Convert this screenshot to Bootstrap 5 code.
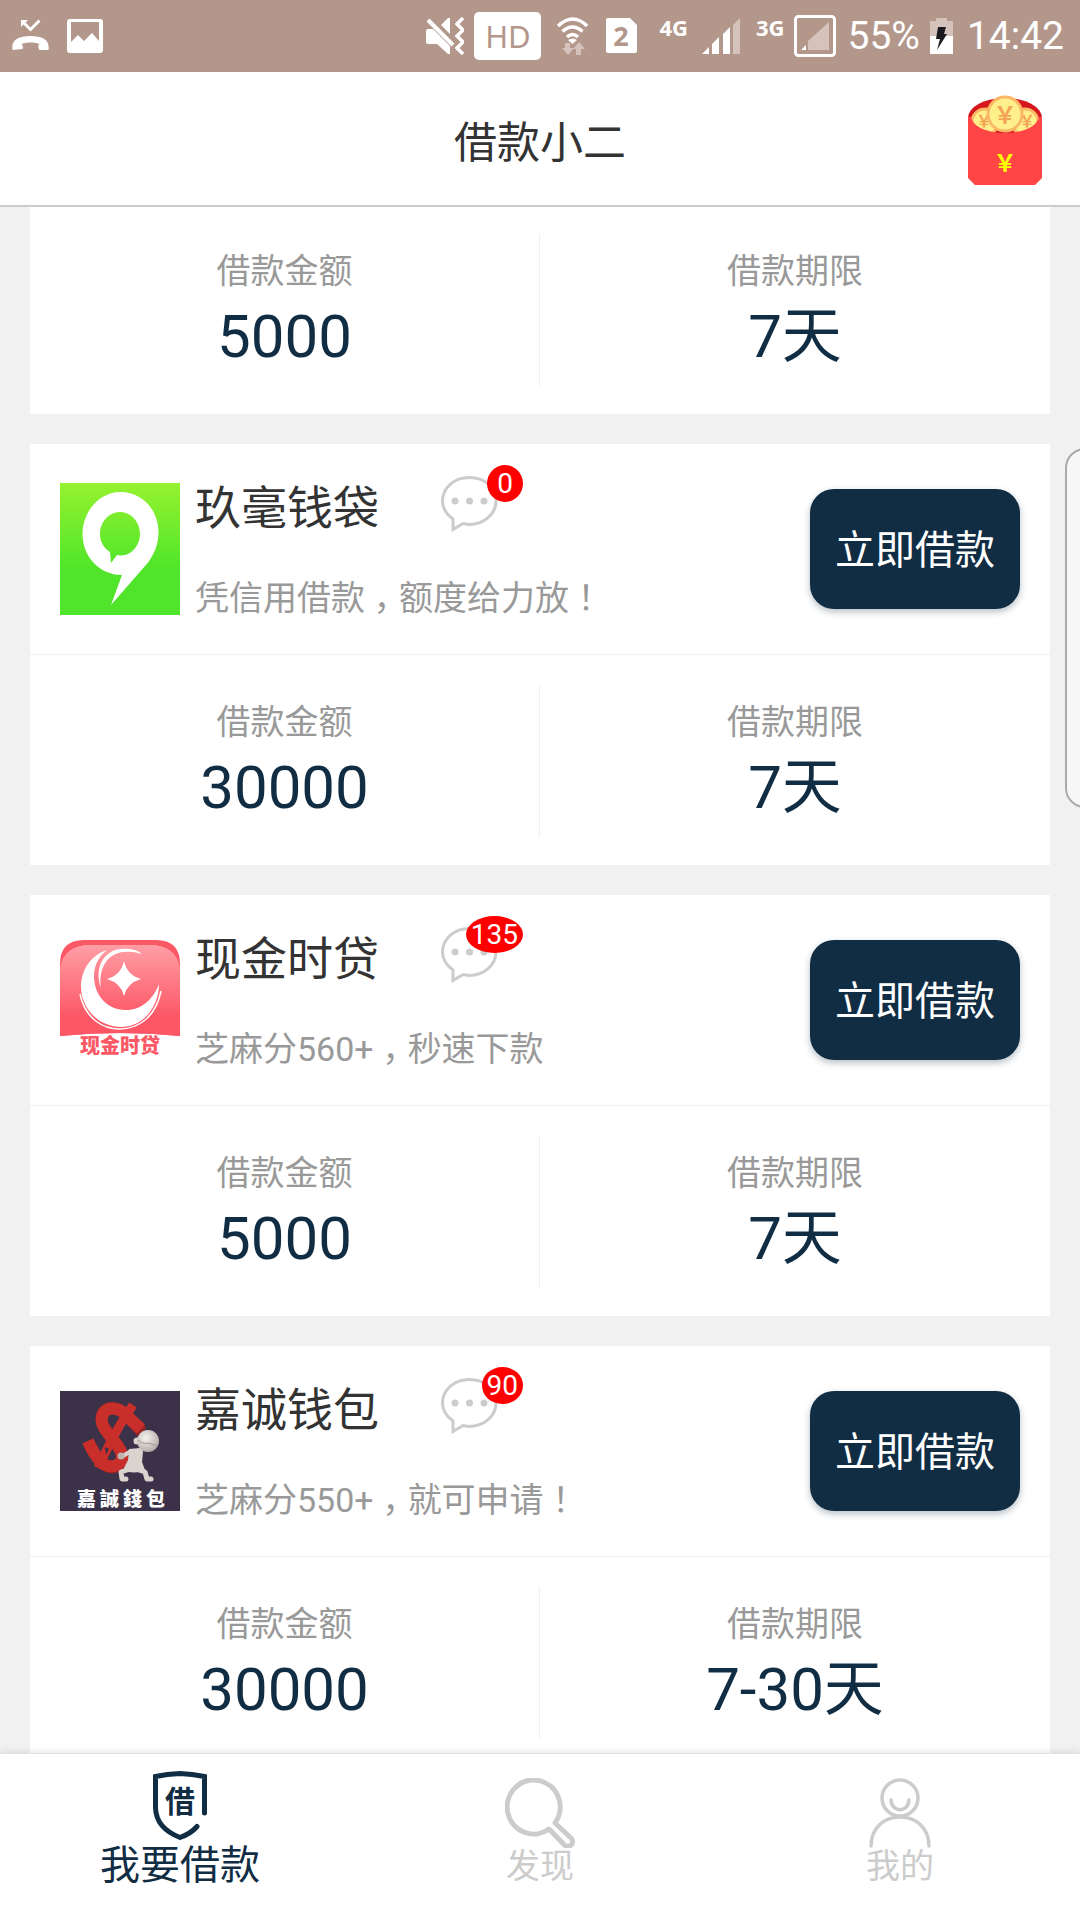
<!DOCTYPE html>
<html lang="zh-CN">
<head>
<meta charset="utf-8">
<meta name="viewport" content="width=device-width, initial-scale=1">
<title>借款小二</title>
<link href="https://cdn.jsdelivr.net/npm/bootstrap@5.3.0/dist/css/bootstrap.min.css" rel="stylesheet">
<style>
  :root { --navy: #112d44; --clay: #b3978b; --ash: #999; --pale: #ccc; }
  body { background: #f1f1f1; color: #333; font-family: Roboto, "Noto Sans CJK SC", sans-serif; }
  svg { display: block; flex: none; }

  .status-bar { background: var(--clay); height: 72px; padding: 0 16px 0 12px; color: #fff; font-size: 39px; line-height: 72px; }
  .status-right { gap: 10px; }
  .hd-chip { background: #fff; color: var(--clay); border-radius: 5px; width: 67px; height: 48px; line-height: 48px; font-family: "Noto Sans", sans-serif; font-size: 31px; text-align: center; }
  .net-type { font-family: "Noto Sans", sans-serif; font-weight: 700; font-size: 22px; line-height: 30px; padding-bottom: 18px; }

  .app-head { height: 136px; border-bottom: 2px solid #ccc; padding: 4px 38px 0; }
  .app-head h1 { font-size: 43px; line-height: 60px; font-weight: 400; padding-top: 5px; }
  .side-cell { width: 74px; }

  .loan-list { min-height: 0; scrollbar-width: none; padding: 0 30px; gap: 30px; }
  .loan-list::-webkit-scrollbar { display: none; }
  .loan-item { background: #fff; flex: none; }
  .loan-top { height: 211px; padding: 0 30px; border-bottom: 1px solid #f0f0f0; }
  .loan-logo { width: 120px; margin-right: 15px; }
  .loan-name { font-size: 46px; line-height: 60px; font-weight: 400; width: 185px; padding-top: 4px; }
  .loan-desc { font-size: 34px; line-height: 50px; color: var(--ash); margin-top: 33px; }
  .wide-mark { display: inline-block; width: 34px; text-align: center; font-family: "Noto Sans CJK JP", sans-serif; font-feature-settings: "halt"; }
  .comment-link { margin-left: 61px; padding-bottom: 4px; }
  .count-badge { position: absolute; right: -25px; top: -11px; min-width: 36px; height: 37px; padding: 0 5px; border-radius: 50%; background: #f00; color: #fff; font-size: 28px; line-height: 38px; text-align: center; }
  .btn-loan { --bs-btn-color: #fff; --bs-btn-bg: var(--navy); --bs-btn-hover-color: #fff; --bs-btn-hover-bg: #1a3d5a; --bs-btn-border-width: 0; --bs-btn-border-radius: 24px; width: 210px; height: 120px; padding: 5px 0 0; font-size: 40px; box-shadow: 0 3px 7px rgba(17,45,68,.3); }

  .loan-stats { padding: 30px 0 28px; }
  .loan-stats > div { padding: 12px 0 14px; }
  .loan-stats > div:first-child { border-right: 1px solid #f0f0f0; }
  .loan-stats dt { font-size: 34px; line-height: 50px; font-weight: 400; color: var(--ash); }
  .loan-stats dd { font-size: 60px; line-height: 70px; color: var(--navy); margin: 6px 0 0; }
  .loan-cut .loan-stats { padding-top: 27px; }

  .edge-handle { position: absolute; right: -25px; top: 241px; width: 40px; height: 360px; border: 2px solid #aaa; border-radius: 24px; background: #f7f7f7; }

  .tab-bar { height: 169px; background: #fff; border-top: 1px solid #e0e0e0; box-shadow: 0 0 9px rgba(0,0,0,.12); z-index: 2; }
  .tab-bar a { color: var(--pale); font-size: 34px; line-height: 36px; text-decoration: none; padding-bottom: 36px; }
  .tab-bar a.active { color: var(--navy); font-size: 40px; line-height: 50px; padding-bottom: 29px; }
</style>
</head>
<body>
<div class="d-flex flex-column vh-100 overflow-hidden">

  <div class="status-bar d-flex align-items-center justify-content-between">
    <div class="d-flex align-items-center">
      <svg width="55" height="36" viewBox="0 0 55 36" fill="#fff"><path d="M9 2l7 0-2.500 2.500 5 5 8-8 2 2-10 10-7-7-2.500 2.500z"/><path d="M.5 32C-1 22 6 18 18.500 18S38 22 36.500 32l-9 0c-2-3-1-5 0-6-5-2-12-2-18 0 1 1 2 3 1 5z"/></svg>
      <svg width="36" height="36" viewBox="0 0 36 36"><rect x="0" y="1" width="36" height="34" rx="3" fill="#fff"/><path d="M4 4h28v19l-7-8-8 8-6-6-7 7z" fill="#b3978b"/></svg>
    </div>
    <div class="status-right d-flex align-items-center">
      <svg width="38" height="38" viewBox="0 0 38 38" fill="#fff"><path d="M0 14q0-2 2-2h5l17 17v8h-2L11 27H2q-2 0-2-2z"/><path d="M15 8l7-7h2v16z"/><path d="M2 3l25 25" stroke="#fff" stroke-width="4"/><path d="M37 1l-6 6 6 6-6 6 6 6-6 6 6 6" fill="none" stroke="#fff" stroke-width="3.500"/></svg>
      <span class="hd-chip">HD</span>
      <svg width="45" height="40" viewBox="2 0 45 40" fill="none"><path d="M9 10q15-14 29 0M13.500 15.500q10-9 20 0M18 21q5.500-5 11 0" stroke="#fff" stroke-width="3.500"/><path d="M19 24q5-3 9 0l-4.500 4z" fill="#fff"/><path d="M16 27h5v5h4l-6 7-6-7h3zM27 39h5v-6h4l-6-7-6 7h3z" fill="#d5c3bb"/></svg>
      <svg width="43" height="36" viewBox="0 0 43 36"><path d="M2 0h22l7 7v26q0 2-2 2H2q-2 0-2-2V2q0-2 2-2z" fill="#fff"/><text x="15" y="28" text-anchor="middle" font-family="Noto Sans, sans-serif" font-weight="700" font-size="27" fill="#b3978b">2</text></svg>
      <span class="net-type me-1">4G</span>
      <svg width="44" height="36" viewBox="0 0 44 36" fill="#fff"><path d="M0 36l7-7v7zM10 26l7-7v17h-7zM21 16l7-7v27h-7z"/><path d="M31 7l7-7v36h-7z" fill="#d5c3bb"/></svg>
      <span class="net-type">3G</span>
      <svg width="43" height="42" viewBox="0 0 43 42"><rect x="1.500" y="1.500" width="39" height="39" rx="3" fill="none" stroke="#fff" stroke-width="3"/><path d="M14 26L35 7v28H14z" fill="#d5c3bb"/><path d="M7 35l5-5v5z" fill="#fff"/></svg>
      <span>55%</span>
      <svg width="27" height="36" viewBox="0 0 27 36"><path d="M0 3h6V0h11v3h6v16H0z" fill="#d5c3bb"/><path d="M0 18h23v18H0z" fill="#fff"/><path d="M8 9h8l-2 7h3L7 32l3-11H6z" fill="#1b1a20"/></svg>
      <span>14:42</span>
    </div>
  </div>

  <header class="app-head bg-white d-flex align-items-center justify-content-between">
    <span class="side-cell"></span>
    <h1 class="m-0">借款小二</h1>
    <a href="#" class="side-cell" aria-label="红包">
      <svg width="74" height="90" viewBox="0 0 74 90">
        <ellipse cx="37" cy="23" rx="37" ry="20" fill="#d5161c"/>
        <g fill="#fff08c" stroke="#fbb866" stroke-width="3"><circle cx="17" cy="27" r="13"/><circle cx="57" cy="27" r="13"/></g>
        <g font-family="Noto Sans CJK SC, sans-serif" font-weight="700" text-anchor="middle" fill="#f4a455" font-size="16"><text x="16" y="32">￥</text><text x="59" y="32">￥</text></g>
        <path d="M0 22h3c2 10 17 16 34 16s32-6 34-16h3v61l-7 7H7l-7-7z" fill="#ff4546"/>
        <circle cx="37" cy="19" r="17" fill="#fff08c" stroke="#fbb866" stroke-width="3"/>
        <g font-family="Noto Sans CJK SC, sans-serif" font-weight="700" text-anchor="middle" font-size="23"><text x="37" y="28" fill="#f4a455">￥</text><text x="37" y="76" fill="#ff0">￥</text></g>
      </svg>
    </a>
  </header>

  <div class="position-relative d-flex flex-column flex-grow-1 overflow-hidden">
    <main class="loan-list d-flex flex-column flex-grow-1 overflow-auto">

      <section class="loan-item loan-cut">
        <dl class="loan-stats d-flex text-center m-0">
          <div class="col-6"><dt>借款金额</dt><dd>5000</dd></div>
          <div class="col-6"><dt>借款期限</dt><dd>7天</dd></div>
        </dl>
      </section>

      <section class="loan-item">
        <div class="loan-top d-flex align-items-center">
          <div class="loan-logo">
            <svg width="120" height="132" viewBox="0 0 120 132">
              <defs><linearGradient id="lime" x1="0" y1="0" x2="0" y2="1"><stop offset="0" stop-color="#95f22f"/><stop offset=".65" stop-color="#50e52a"/></linearGradient></defs>
              <rect width="120" height="132" fill="url(#lime)"/>
              <path fill="#fff" fill-rule="evenodd" d="M60.500 9C82 9 98.500 27 98.500 49c0 12-4 21-10 30L51 122l11-30C39 92 22.500 73 22.500 51S39 9 60.500 9zM60 29c-11 0-20 10-20 22 0 8 4 14 10 18l1 11 6-8c13 3 23-9 23-21 0-12-9-22-20-22z"/>
            </svg>
          </div>
          <div>
            <div class="d-flex align-items-center">
              <h2 class="loan-name m-0">玖毫钱袋</h2>
              <a href="#" class="comment-link position-relative" aria-label="评论 0">
                <svg width="57" height="56" viewBox="0 0 57 56"><path d="M12 43C5 38 1.500 32 1.500 25 1.500 12 13 1.500 28.500 1.500S55 12 55 25 43 48.500 28 48.500L22 47.500 12 53.500z" fill="none" stroke="#ccc" stroke-width="3"/><g fill="#ccc"><circle cx="14" cy="25" r="3.500"/><circle cx="28.500" cy="25" r="3.500"/><circle cx="43" cy="25" r="3.500"/></g></svg>
                <span class="count-badge">0</span>
              </a>
            </div>
            <p class="loan-desc mb-0">凭信用借款<span class="wide-mark">，</span>额度给力放<span class="wide-mark">！</span></p>
          </div>
          <button type="button" class="btn btn-loan ms-auto">立即借款</button>
        </div>
        <dl class="loan-stats d-flex text-center m-0">
          <div class="col-6"><dt>借款金额</dt><dd>30000</dd></div>
          <div class="col-6"><dt>借款期限</dt><dd>7天</dd></div>
        </dl>
      </section>

      <section class="loan-item">
        <div class="loan-top d-flex align-items-center">
          <div class="loan-logo">
            <svg width="120" height="120" viewBox="0 0 120 120">
              <defs>
                <linearGradient id="rose" x1="0" y1="0" x2="0" y2="1"><stop offset="0" stop-color="#ff9ea5"/><stop offset=".8" stop-color="#fd5665"/></linearGradient>
              </defs>
              <path d="M0 24Q0 0 24 0h72q24 0 24 24v72Q60 90 0 96z" fill="#fb5866"/>
              <path d="M0 28Q4 5 30 5h60q26 0 30 23v68Q60 90 0 96z" fill="url(#rose)"/>
              <g fill="#fff"><path d="M47 10C28 16 21 34 21 46c0 24 19 41 40 41 23 0 38-21 38-43-6 16-18 26-33 26-20 0-32-16-32-34 0-11 5-20 13-26z"/>
              <path d="M41 48C33 26 46 6 68 9q8 0 14 5-10-3-18-2C48 13 38 28 41 48z"/>
              <path d="M64 21q3 14 17 18-14 4-17 17-3-13-17-17 14-4 17-18z"/></g>
              <path d="M20 54c5 24 22 35 40 35s36-12 41-38" fill="none" stroke="#fff" stroke-width="1.500"/>
              <text x="60" y="113" text-anchor="middle" font-family="Noto Sans CJK SC, sans-serif" font-weight="900" font-size="20" fill="#fb5866">现金时贷</text>
            </svg>
          </div>
          <div>
            <div class="d-flex align-items-center">
              <h2 class="loan-name m-0">现金时贷</h2>
              <a href="#" class="comment-link position-relative" aria-label="评论 135">
                <svg width="57" height="56" viewBox="0 0 57 56"><path d="M12 43C5 38 1.500 32 1.500 25 1.500 12 13 1.500 28.500 1.500S55 12 55 25 43 48.500 28 48.500L22 47.500 12 53.500z" fill="none" stroke="#ccc" stroke-width="3"/><g fill="#ccc"><circle cx="14" cy="25" r="3.500"/><circle cx="28.500" cy="25" r="3.500"/><circle cx="43" cy="25" r="3.500"/></g></svg>
                <span class="count-badge">135</span>
              </a>
            </div>
            <p class="loan-desc mb-0">芝麻分560+<span class="wide-mark">，</span>秒速下款</p>
          </div>
          <button type="button" class="btn btn-loan ms-auto">立即借款</button>
        </div>
        <dl class="loan-stats d-flex text-center m-0">
          <div class="col-6"><dt>借款金额</dt><dd>5000</dd></div>
          <div class="col-6"><dt>借款期限</dt><dd>7天</dd></div>
        </dl>
      </section>

      <section class="loan-item">
        <div class="loan-top d-flex align-items-center">
          <div class="loan-logo">
            <svg width="120" height="120" viewBox="0 0 120 120">
              <defs><radialGradient id="clayhead" cx=".4" cy=".35" r=".75"><stop offset="0" stop-color="#f5f2ec"/><stop offset="1" stop-color="#aaa39f"/></radialGradient></defs>
              <rect width="120" height="120" fill="#3b3249"/>
              <g fill="none" stroke-linejoin="round">
                <g stroke="#962220"><path d="M82 41L70 28C62 17 48 13 43 22c-5 10 4 19 11 28 8 10 13 20 4 25-12 6-23-9-30-25" stroke-width="12"/></g>
                <g stroke="#c92f2a"><path d="M81 38L68 26C61 17 48 14 43 23c-5 9 4 18 11 27 8 10 12 19 3 24-12 6-22-8-29-24" stroke-width="12"/><path d="M73 14L60 34 50 52 38 77" stroke-width="9"/></g>
              </g>
              <path d="M53 27h5l-3 6zM45 56l4 2-3 6z" fill="#3b3249"/>
              <g fill="#d9d4ce"><path d="M69 58l11-1 3 4-1 10 3 8q-11 5-22 0l5-10z"/><circle cx="77" cy="50" r="3.500"/></g>
              <g fill="none" stroke="#d9d4ce" stroke-linecap="round" stroke-linejoin="round"><path d="M71 60l-8 5M81 59l6-3" stroke-width="4"/><path d="M67 79l-6 2 1 7h4M79 79l6 2 2 7h4" stroke-width="5"/></g>
              <circle cx="61" cy="65" r="3.500" fill="#bdb6b0"/>
              <ellipse cx="88" cy="50" rx="11" ry="11" fill="url(#clayhead)"/>
              <path d="M78 49q6 5 11 3l8 3" fill="none" stroke="#a19a95"/>
              <text x="17 40 63 86" y="115" font-family="Noto Sans CJK TC, sans-serif" font-weight="900" font-size="19" fill="#fff">嘉誠錢包</text>
            </svg>
          </div>
          <div>
            <div class="d-flex align-items-center">
              <h2 class="loan-name m-0">嘉诚钱包</h2>
              <a href="#" class="comment-link position-relative" aria-label="评论 90">
                <svg width="57" height="56" viewBox="0 0 57 56"><path d="M12 43C5 38 1.500 32 1.500 25 1.500 12 13 1.500 28.500 1.500S55 12 55 25 43 48.500 28 48.500L22 47.500 12 53.500z" fill="none" stroke="#ccc" stroke-width="3"/><g fill="#ccc"><circle cx="14" cy="25" r="3.500"/><circle cx="28.500" cy="25" r="3.500"/><circle cx="43" cy="25" r="3.500"/></g></svg>
                <span class="count-badge">90</span>
              </a>
            </div>
            <p class="loan-desc mb-0">芝麻分550+<span class="wide-mark">，</span>就可申请<span class="wide-mark">！</span></p>
          </div>
          <button type="button" class="btn btn-loan ms-auto">立即借款</button>
        </div>
        <dl class="loan-stats d-flex text-center m-0">
          <div class="col-6"><dt>借款金额</dt><dd>30000</dd></div>
          <div class="col-6"><dt>借款期限</dt><dd>7-30天</dd></div>
        </dl>
      </section>
    </main>
    <div class="edge-handle"></div>
  </div>

  <nav class="tab-bar d-flex">
    <a href="#" class="active col-4 d-flex flex-column align-items-center justify-content-end">
      <svg width="56" height="70" viewBox="0 0 56 70"><g fill="none" stroke="#112d44" stroke-width="5" stroke-linecap="round"><path d="M52.500 42V5.500Q40 3 28 2.500 15 3 3.500 5.500V37C4 52 14 61 28 66.500q11-4 17-11"/></g><text x="28" y="41" text-anchor="middle" font-family="Noto Sans CJK SC, sans-serif" font-weight="700" font-size="30" fill="#112d44">借</text></svg>
      <span>我要借款</span>
    </a>
    <a href="#" class="col-4 d-flex flex-column align-items-center justify-content-end">
      <svg width="70" height="70" viewBox="0 0 70 70"><path d="M44 51A26.500 27 0 1 1 50 45L66 60A4.500 4.500 0 0 1 59.500 67z" fill="none" stroke="#ccc" stroke-width="5" stroke-linejoin="round"/></svg>
      <span>发现</span>
    </a>
    <a href="#" class="col-4 d-flex flex-column align-items-center justify-content-end">
      <svg width="62" height="70" viewBox="0 0 62 70"><g fill="none" stroke="#ccc" stroke-width="3.500" stroke-linecap="round"><circle cx="31" cy="20" r="18"/><path d="M22 22c1 13 17 13 18 0M2 68C2 50 15 39 31 39s29 11 29 29"/></g></svg>
      <span>我的</span>
    </a>
  </nav>
</div>
<script src="https://cdn.jsdelivr.net/npm/bootstrap@5.3.0/dist/js/bootstrap.bundle.min.js"></script>
</body>
</html>
